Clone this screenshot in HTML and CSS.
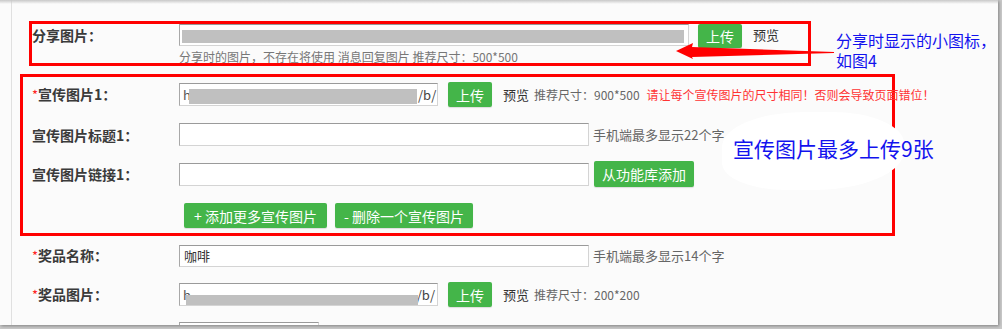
FILE: index.html
```html
<!DOCTYPE html>
<html lang="zh-CN">
<head>
<meta charset="utf-8">
<title>活动设置</title>
<link rel="stylesheet" href="styles.css">
</head>
<body>
<div class="page">
  <div class="topfade"></div>
  <div class="content">
    <div class="box box-share">
      <div class="row row-share">
        <label class="label">分享图片：</label>
        <div class="field w-share"><span class="blur blur-share"></span></div>
        <button class="btn btn-up gap9">上传</button>
        <span class="preview">预览</span>
      </div>
      <div class="help">分享时的图片，不存在将使用 消息回复图片 推荐尺寸：500*500</div>
    </div>

    <div class="box box-banner">
      <div class="row">
        <label class="label"><i class="req">*</i>宣传图片1：</label>
        <div class="field w-url"><span class="fchar">h</span><span class="blur blur-url"></span><span class="fend">/b/</span></div>
        <button class="btn btn-up">上传</button>
        <span class="preview">预览</span>
        <span class="size">推荐尺寸：900*500</span>
        <span class="warn">请让每个宣传图片的尺寸相同！否则会导致页面错位！</span>
      </div>
      <div class="row mt15">
        <label class="label">宣传图片标题1：</label>
        <div class="field w-text"></div>
        <span class="hint">手机端最多显示22个字</span>
      </div>
      <div class="row mt14 row-tall">
        <label class="label">宣传图片链接1：</label>
        <div class="field w-text"></div>
        <button class="btn btn-lib">从功能库添加</button>
      </div>
      <div class="row mt16 row-actions">
        <button class="btn btn-act">+ 添加更多宣传图片</button>
        <button class="btn btn-act btn-del">- 删除一个宣传图片</button>
      </div>
    </div>

    <div class="plain">
      <div class="row mt7">
        <label class="label"><i class="req">*</i>奖品名称：</label>
        <div class="field w-text f22"><span class="fval">咖啡</span></div>
        <span class="hint">手机端最多显示14个字</span>
      </div>
      <div class="row mt14">
        <label class="label"><i class="req">*</i>奖品图片：</label>
        <div class="field w-url"><span class="fchar">h</span><span class="fend fend-low">/b/</span><span class="blur blur-low"></span></div>
        <button class="btn btn-up">上传</button>
        <span class="preview">预览</span>
        <span class="size">推荐尺寸：200*200</span>
      </div>
      <div class="row mt14">
        <span class="label"></span>
        <div class="field w-small"></div>
      </div>
    </div>
  </div>

  <div class="smudge"></div>
  <svg class="arrow" width="165" height="20" viewBox="670 41 165 20">
    <polygon points="676,51 693,43 692,47 834,52 834,53 692,57 693,59" fill="#ff0000"/>
  </svg>
  <div class="note note-share"><div class="note-line">分享时显示的小图标，</div><div class="note-line">如图4</div></div>
  <div class="note note-banner">宣传图片最多上传9张</div>
</div>
</body>
</html>
```
FILE: styles.css
```css
html, body {
  margin: 0;
  padding: 0;
}
body {
  background: #c9c9c9;
  width: 1002px;
  height: 329px;
  overflow: hidden;
  font-family: "Noto Sans CJK SC", "Microsoft YaHei", sans-serif;
  color: #333;
}
.page {
  position: relative;
  width: 998px;
  height: 325px;
  background: #fbfbfb;
  padding-left: 11px;
  box-sizing: border-box;
  box-shadow: 1px 1px 3px rgba(0,0,0,0.35);
  overflow: hidden;
}
.topfade {
  position: absolute;
  left: 0;
  top: 0;
  width: 100%;
  height: 4px;
  background: linear-gradient(#c8c8c8, rgba(251,251,251,0));
}
.content {
  border-left: 1px solid #e0e0e0;
  height: 100%;
  padding-left: 8px;
  padding-top: 21px;
  box-sizing: border-box;
}
.box {
  border: 3px solid #ff0000;
  box-sizing: border-box;
}
.box-share {
  margin-left: 9px;
  width: 782px;
  height: 45px;
}
.box-banner {
  margin-top: 8px;
  width: 875px;
  height: 162px;
  padding: 5px 0 5px 9px;
}
.plain {
  padding-left: 12px;
}
.row {
  display: flex;
  align-items: center;
  min-height: 25px;
}
.row-share {
  align-items: flex-start;
  min-height: 24px;
  height: 24px;
}
.row-share .label {
  line-height: 22px;
}
.row-share .preview {
  line-height: 22px;
}
.row-tall {
  min-height: 26px;
}
.mt7 { margin-top: 7px; }
.mt14 { margin-top: 14px; }
.mt15 { margin-top: 15px; }
.mt16 { margin-top: 16px; }
.label {
  width: 147px;
  flex: none;
  font-size: 14px;
  font-weight: bold;
  color: #3a3a3a;
  line-height: 20px;
  white-space: nowrap;
}
.req {
  font-style: normal;
  color: #ff2222;
  font-weight: normal;
  font-size: 13px;
}
.field {
  position: relative;
  flex: none;
  height: 23px;
  box-sizing: border-box;
  background: #fff;
  border: 1px solid #d4d4d4;
  border-top-color: #9a9a9a;
  border-left-color: #a8a8a8;
  display: flex;
  align-items: center;
  overflow: hidden;
  font-size: 13px;
  color: #333;
}
.f22 { height: 22px; }
.w-share { width: 510px; height: 22px; }
.w-url { width: 259px; }
.w-text { width: 410px; }
.w-small { width: 140px; }
.blur {
  display: block;
  background: #c0c0c0;
}
.blur-share {
  position: absolute;
  left: 2px;
  top: 5px;
  width: 502px;
  height: 13px;
}
.fchar {
  padding-left: 3px;
  width: 6px;
  color: #555;
  flex: none;
}
.blur-url {
  width: 228px;
  height: 15px;
  flex: none;
  margin-top: 4px;
}
.fend {
  padding-left: 1px;
  color: #444;
  flex: none;
}
.fend-low {
  margin-left: auto;
  padding-right: 2px;
}
.blur-low {
  position: absolute;
  left: 6px;
  top: 11px;
  width: 232px;
  height: 11px;
}
.fval {
  padding-left: 4px;
}
.btn {
  flex: none;
  border: none;
  border-radius: 2px;
  background: #44b549;
  color: #fff;
  font-family: inherit;
  font-size: 14px;
  padding: 0;
  line-height: 20px;
  box-shadow: 0 1px 1px rgba(0,0,0,0.12);
}
.btn-up {
  width: 44px;
  height: 25px;
  margin-left: 10px;
}
.gap9 {
  margin-left: 9px;
  height: 24px;
}
.btn-lib {
  width: 100px;
  height: 26px;
  margin-left: 5px;
}
.row-actions {
  padding-left: 152px;
  gap: 8px;
}
.btn-act {
  width: 143px;
  height: 25px;
}
.btn-del {
  width: 138px;
}
.preview {
  font-size: 13px;
  color: #333;
  margin-left: 11px;
  white-space: nowrap;
}
.size {
  font-size: 12px;
  color: #666;
  margin-left: 5px;
  white-space: nowrap;
}
.warn {
  font-size: 12px;
  color: #ff3333;
  margin-left: 7px;
  white-space: nowrap;
}
.hint {
  font-size: 13px;
  color: #666;
  margin-left: 4px;
  white-space: nowrap;
}
.help {
  padding-left: 147px;
  font-size: 12px;
  color: #777;
  line-height: 16px;
  margin-top: 1px;
  white-space: nowrap;
}
.smudge {
  position: absolute;
  left: 722px;
  top: 112px;
  width: 182px;
  height: 78px;
  background: #ffffff;
  border-radius: 45% 40% 50% 35%;
}
.arrow {
  position: absolute;
  left: 670px;
  top: 41px;
}
.note {
  position: absolute;
  color: #1212ee;
  white-space: nowrap;
}
.note-share {
  left: 836px;
  top: 30px;
  font-size: 16px;
  display: flex;
  flex-direction: column;
  gap: 0;
}
.note-line {
  line-height: 20px;
  height: 20px;
}
.note-banner {
  left: 733px;
  top: 135px;
  font-size: 21px;
  line-height: 26px;
}
```
